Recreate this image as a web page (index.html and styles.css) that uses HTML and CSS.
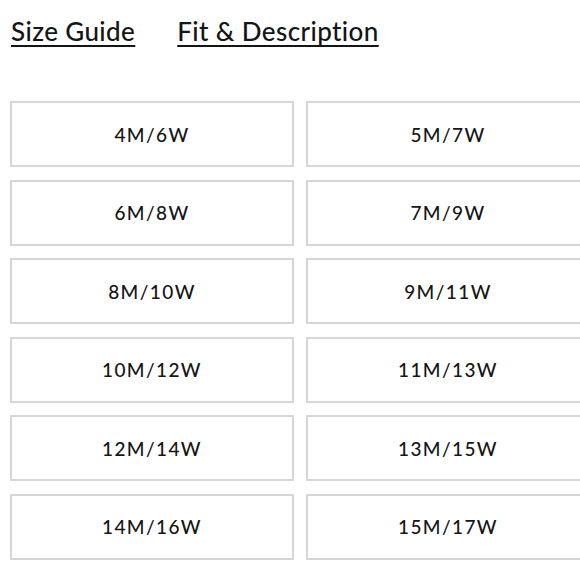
FILE: index.html
```html
<!DOCTYPE html>
<html lang="en">
<head>
<meta charset="utf-8">
<title>Size Guide</title>
<link rel="stylesheet" href="styles.css">
</head>
<body>
<div class="page">
  <nav class="tabs">
    <a class="tab" href="#">Size Guide</a>
    <a class="tab" href="#">Fit &amp; Description</a>
  </nav>
  <div class="sizes">
    <button class="size">4M/6W</button>
    <button class="size">5M/7W</button>
    <button class="size">6M/8W</button>
    <button class="size">7M/9W</button>
    <button class="size">8M/10W</button>
    <button class="size">9M/11W</button>
    <button class="size">10M/12W</button>
    <button class="size">11M/13W</button>
    <button class="size">12M/14W</button>
    <button class="size">13M/15W</button>
    <button class="size">14M/16W</button>
    <button class="size">15M/17W</button>
  </div>
</div>
</body>
</html>
```
FILE: styles.css
```css
html, body {
  margin: 0;
  padding: 0;
  background: #ffffff;
  overflow: hidden;
}

body {
  font-family: "Lato", "Liberation Sans", sans-serif;
  color: #151515;
}

.page {
  width: 590px;
  padding-left: 10px;
  box-sizing: border-box;
}

.tabs {
  display: flex;
  gap: 42px;
  padding-left: 1px;
  margin-top: 16px;
  height: 30px;
}

.tab {
  font-size: 26px;
  font-weight: 500;
  line-height: 30px;
  letter-spacing: 0.4px;
  color: #151515;
  text-decoration: underline;
  text-decoration-thickness: 1.5px;
  text-underline-offset: 4px;
}

.sizes {
  margin-top: 55px;
  display: grid;
  grid-template-columns: 284px 284px;
  column-gap: 12px;
  row-gap: 12.5px;
}

.size {
  height: 66px;
  box-sizing: border-box;
  border: 2px solid #d6d6d6;
  background: #ffffff;
  font-family: "Lato", "Liberation Sans", sans-serif;
  font-size: 19px;
  font-weight: 500;
  letter-spacing: 1.4px;
  color: #151515;
  display: flex;
  align-items: center;
  justify-content: center;
  padding: 0;
}
```
